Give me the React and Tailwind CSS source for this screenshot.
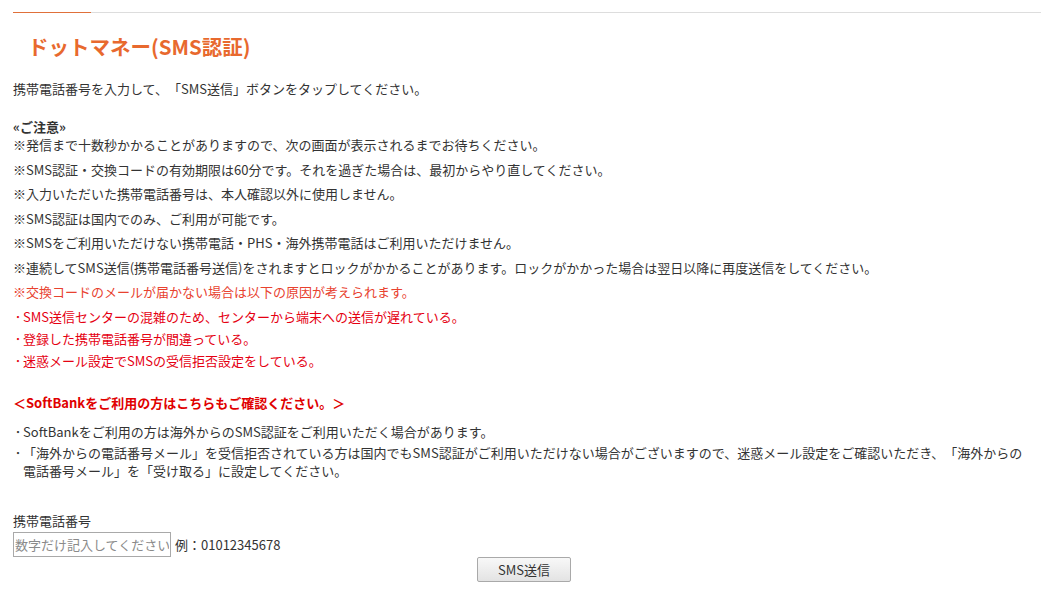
const notes = [
  "※発信まで十数秒かかることがありますので、次の画面が表示されるまでお待ちください。",
  "※SMS認証・交換コードの有効期限は60分です。それを過ぎた場合は、最初からやり直してください。",
  "※入力いただいた携帯電話番号は、本人確認以外に使用しません。",
  "※SMS認証は国内でのみ、ご利用が可能です。",
  "※SMSをご利用いただけない携帯電話・PHS・海外携帯電話はご利用いただけません。",
  "※連続してSMS送信(携帯電話番号送信)をされますとロックがかかることがあります。ロックがかかった場合は翌日以降に再度送信をしてください。",
];

const causes = [
  "SMS送信センターの混雑のため、センターから端末への送信が遅れている。",
  "登録した携帯電話番号が間違っている。",
  "迷惑メール設定でSMSの受信拒否設定をしている。",
];

const Bullet = ({ children, className = "" }) => (
  <div className={`flex leading-[18px] ${className}`}>
    <span className="w-[10px] shrink-0 text-center">･</span>
    <span>{children}</span>
  </div>
);

export default function App() {
  return (
    <div
      className="w-[1041px] h-[604px] bg-white text-[#333] text-[13px] pl-[13px] pt-[12px] overflow-hidden [text-spacing-trim:space-all]"
      style={{ fontFamily: '"Noto Sans CJK JP", "Noto Sans", sans-serif' }}
    >
      <div className="flex h-px">
        <div className="w-[78px] bg-[#e0703a]" />
        <div className="flex-1 bg-[#dddddd]" />
      </div>

      <h1 className="mt-[19px] pl-[15px] text-[20.5px] leading-[28px] font-bold text-[#e8692e]">
        ドットマネー(SMS認証)
      </h1>

      <p className="mt-[19px] leading-[20px]">
        携帯電話番号を入力して、「SMS送信」ボタンをタップしてください。
      </p>

      <p className="mt-[19px] leading-[18px] font-bold">«ご注意»</p>
      <div className="flex flex-col gap-[6.5px]">
        {notes.map((n) => (
          <p key={n} className="leading-[18px]">
            {n}
          </p>
        ))}
        <p className="leading-[18px] text-[#e8422f]">
          ※交換コードのメールが届かない場合は以下の原因が考えられます。
        </p>
      </div>

      <div className="mt-[7px] flex flex-col gap-[4px] text-[#e50012]">
        {causes.map((c) => (
          <Bullet key={c}>{c}</Bullet>
        ))}
      </div>

      <p className="mt-[24px] leading-[18px] font-bold text-[#e00000]">
        ＜SoftBankをご利用の方はこちらもご確認ください。＞
      </p>
      <Bullet className="mt-[11px]">
        SoftBankをご利用の方は海外からのSMS認証をご利用いただく場合があります。
      </Bullet>
      <Bullet className="mt-[3px]">
        「海外からの電話番号メール」を受信拒否されている方は国内でもSMS認証がご利用いただけない場合がございますので、迷惑メール設定をご確認いただき、「海外からの
        <br />
        電話番号メール」を「受け取る」に設定してください。
      </Bullet>

      <p className="mt-[32px] leading-[18px]">携帯電話番号</p>
      <div className="mt-[2px] flex items-center gap-[4px]">
        <input
          type="text"
          placeholder="数字だけ記入してください"
          className="w-[158px] h-[25px] border border-[#a9a9a9] px-[1px] text-[13px] placeholder:text-[#8a8a8a] outline-none"
        />
        <span>例：01012345678</span>
      </div>
      <div className="flex justify-center pr-[13px] pl-[7px]">
        <button className="w-[94px] h-[25px] border border-[#a9a9a9] rounded-[2px] bg-gradient-to-b from-[#f8f8f8] to-[#e3e3e3] text-[13px] text-[#333]">
          SMS送信
        </button>
      </div>
    </div>
  );
}
